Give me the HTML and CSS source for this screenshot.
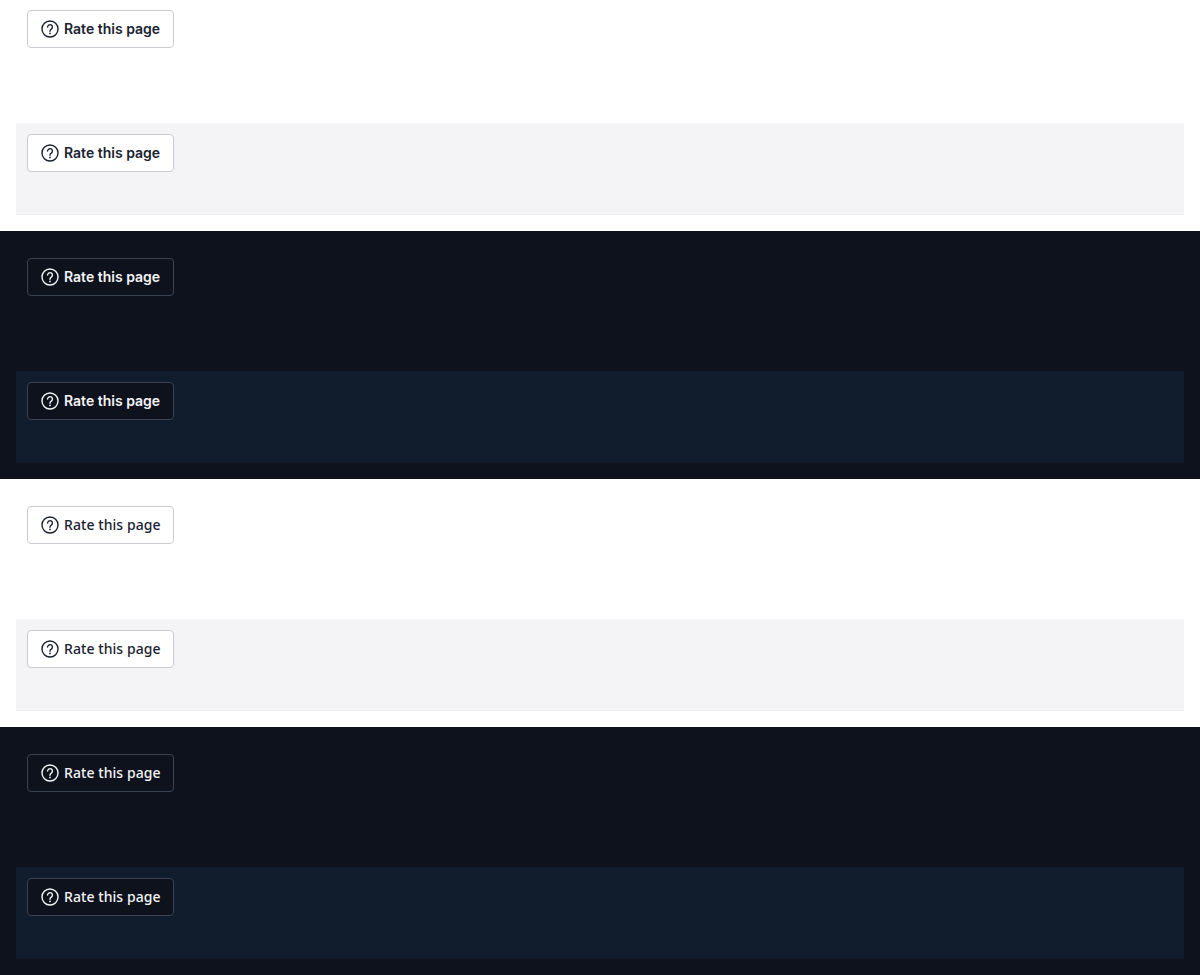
FILE: index.html
```html
<!DOCTYPE html>
<html lang="en">
<head>
    <meta charset="UTF-8">
    <meta name="viewport" content="width=device-width, initial-scale=1.0">
    <title>Rate this page</title>
    <link rel="stylesheet" href="styles.css">
</head>
<body>
    <svg class="sprite" width="0" height="0" aria-hidden="true">
        <symbol id="help" viewBox="0 0 18 18">
            <circle cx="9" cy="9" r="8" fill="none" stroke="currentColor" stroke-width="1.4"/>
            <path d="M6.6 7.1a2.4 2.4 0 1 1 3.7 2c-.8.5-1.3 1-1.3 1.9v.2" fill="none" stroke="currentColor" stroke-width="1.4" stroke-linecap="round"/>
            <circle cx="9" cy="13.4" r=".85" fill="currentColor"/>
        </symbol>
    </svg>

    <div class="page">
        <section class="theme theme-light font-inter">
            <div class="slot">
                <button class="rate-btn"><svg class="rate-icon"><use href="#help"/></svg>Rate this page</button>
            </div>
            <div class="slot slot-muted">
                <button class="rate-btn"><svg class="rate-icon"><use href="#help"/></svg>Rate this page</button>
            </div>
        </section>

        <section class="theme theme-dark font-inter">
            <div class="slot">
                <button class="rate-btn"><svg class="rate-icon"><use href="#help"/></svg>Rate this page</button>
            </div>
            <div class="slot slot-muted">
                <button class="rate-btn"><svg class="rate-icon"><use href="#help"/></svg>Rate this page</button>
            </div>
        </section>

        <section class="theme theme-light font-alt">
            <div class="slot">
                <button class="rate-btn"><svg class="rate-icon"><use href="#help"/></svg>Rate this page</button>
            </div>
            <div class="slot slot-muted">
                <button class="rate-btn"><svg class="rate-icon"><use href="#help"/></svg>Rate this page</button>
            </div>
        </section>

        <section class="theme theme-dark font-alt">
            <div class="slot">
                <button class="rate-btn"><svg class="rate-icon"><use href="#help"/></svg>Rate this page</button>
            </div>
            <div class="slot slot-muted">
                <button class="rate-btn"><svg class="rate-icon"><use href="#help"/></svg>Rate this page</button>
            </div>
        </section>
    </div>
</body>
</html>
```

FILE: styles.css
```css
body {
    margin: 0;
    overflow: hidden;
}

.sprite {
    display: block;
}

/* the capture starts a little way into the first section */
.page {
    margin-top: -17px;
}

.theme {
    display: flex;
    flex-direction: column;
    gap: 32px;
    padding: 16px;
}

.theme-light {
    --bg: #ffffff;
    --muted: #f4f4f6;
    --muted-edge: #eeeff1;
    --btn-bg: #ffffff;
    --btn-border: #cacbd0;
    --text: #1b2230;
    background: var(--bg);
}

.theme-dark {
    --bg: #0e121d;
    --muted: #111c2c;
    --muted-edge: #101825;
    --btn-bg: #0e121d;
    --btn-border: #3a4352;
    --text: #f3f4f6;
    background: var(--bg);
}

.font-inter {
    --font: 'Inter', sans-serif;
    --weight: 600;
    --spacing: 0;
}

.font-alt {
    --font: 'Noto Sans', sans-serif;
    --weight: 500;
    --spacing: 0.07px;
}

.slot {
    box-sizing: border-box;
    height: 92px;
    padding: 11px;
}

.slot-muted {
    background: var(--muted);
    border-bottom: 1px solid var(--muted-edge);
}

.rate-btn {
    display: flex;
    align-items: center;
    gap: 5px;
    box-sizing: border-box;
    width: 147px;
    height: 38px;
    padding: 0 13px;
    background: var(--btn-bg);
    border: 1px solid var(--btn-border);
    border-radius: 4px;
    color: var(--text);
    font-family: var(--font);
    font-size: 14px;
    font-weight: var(--weight);
    letter-spacing: var(--spacing);
    line-height: 20px;
    white-space: nowrap;
}

.rate-icon {
    flex: none;
    width: 18px;
    height: 18px;
}
```
